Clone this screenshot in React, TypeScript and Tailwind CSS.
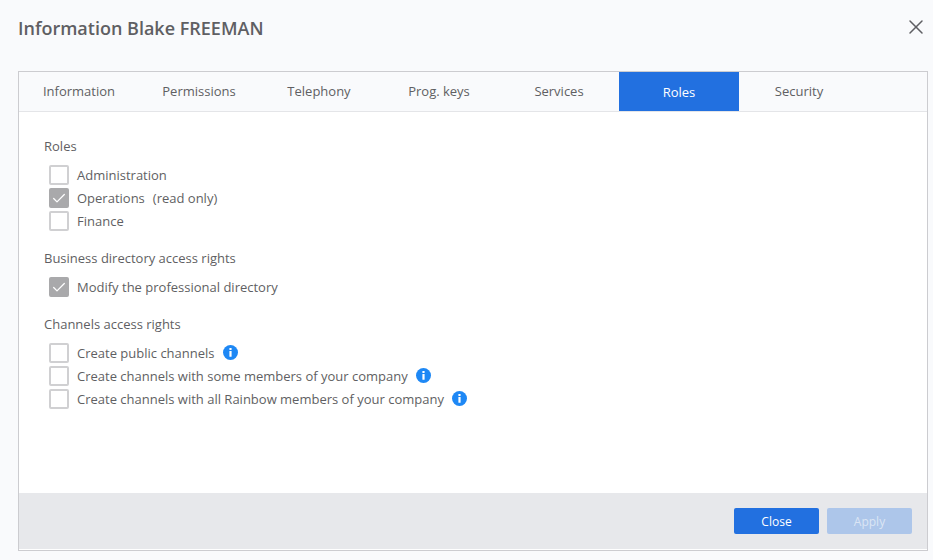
import { Check, X } from 'lucide-react';

const tabs = ['Information', 'Permissions', 'Telephony', 'Prog. keys', 'Services', 'Roles', 'Security'];

function Box({ checked }: { checked?: boolean }) {
  return (
    <span className={`w-[20px] h-[20px] -mt-[1px] rounded-[2px] flex items-center justify-center shrink-0 border-2 ${checked ? 'bg-[#a9a9ab] border-[#a9a9ab]' : 'bg-white border-[#d0d0d2]'}`}>
      {checked && <Check size={17} strokeWidth={1.9} className="text-white" />}
    </span>
  );
}

function Info() {
  return (
    <svg width="15" height="15" viewBox="0 0 15 15" className="shrink-0">
      <circle cx="7.5" cy="7.5" r="7.5" fill="#1e88f5" />
      <rect x="6.4" y="3" width="2.2" height="2" rx="0.5" fill="#fff" />
      <rect x="6.4" y="6" width="2.2" height="5.8" rx="0.5" fill="#fff" />
    </svg>
  );
}

function Row({ label, note, checked, info }: { label: string; note?: string; checked?: boolean; info?: boolean }) {
  return (
    <div className="h-[23px] flex items-center pl-[5px]">
      <Box checked={checked} />
      <span className="ml-[8px] text-[13px] leading-[23px] whitespace-pre">{label}</span>
      {note && <span className="ml-[8px] text-[13px] leading-[23px]">{note}</span>}
      {info && <span className="ml-[8px] -mt-[3px] flex"><Info /></span>}
    </div>
  );
}

export default function App() {
  return (
    <div className="w-[933px] h-[560px] overflow-hidden bg-[#f9fafc] text-[#5f5f63] flex flex-col" style={{ fontFamily: '"Open Sans", sans-serif' }}>
      <div className="h-[71px] shrink-0 flex items-start justify-between pl-[18px] pr-[5px]">
        <h1 className="mt-[16px] text-[18px] leading-[25px] font-semibold">Information Blake FREEMAN</h1>
        <X size={24} strokeWidth={1.5} className="mt-[15px]" />
      </div>

      <div className="ml-[18px] mr-[5px] h-[480px] border border-[#ccccd0] bg-white flex flex-col">
        <div className="h-[40px] shrink-0 flex bg-[#f9fafc] border-b border-[#e4e5e8]">
          {tabs.map((t) => (
            <div
              key={t}
              className={`w-[120px] text-center text-[13px] ${t === 'Roles' ? 'h-[39px] leading-[40px] bg-[#2270e0] text-white' : 'leading-[38px]'}`}
            >
              {t}
            </div>
          ))}
        </div>

        <div className="flex-1 pt-[24px] pl-[25px]">
          <p className="text-[13px] leading-[20px]">Roles</p>
          <div className="mt-[8px]">
            <Row label="Administration" />
            <Row label="Operations" note="(read only)" checked />
            <Row label="Finance" />
          </div>

          <p className="mt-[15px] text-[13px] leading-[20px]">Business directory access rights</p>
          <div className="mt-[8px]">
            <Row label="Modify the professional directory" checked />
          </div>

          <p className="mt-[15px] text-[13px] leading-[20px]">Channels access rights</p>
          <div className="mt-[8px]">
            <Row label="Create public channels" info />
            <Row label="Create channels with some members of your company" info />
            <Row label="Create channels with all Rainbow members of your company" info />
          </div>
        </div>

        <div className="h-[56px] shrink-0 mb-[1px] bg-[#e7e8eb] flex items-center justify-end gap-[8px] pr-[15px]">
          <button className="w-[85px] h-[26px] pt-[1px] rounded-[2px] bg-[#2270e0] text-white text-[12px]">Close</button>
          <button className="w-[85px] h-[26px] pt-[1px] rounded-[2px] bg-[#adc6ea] text-[#dbe5f4] text-[12px]">Apply</button>
        </div>
      </div>
    </div>
  );
}
